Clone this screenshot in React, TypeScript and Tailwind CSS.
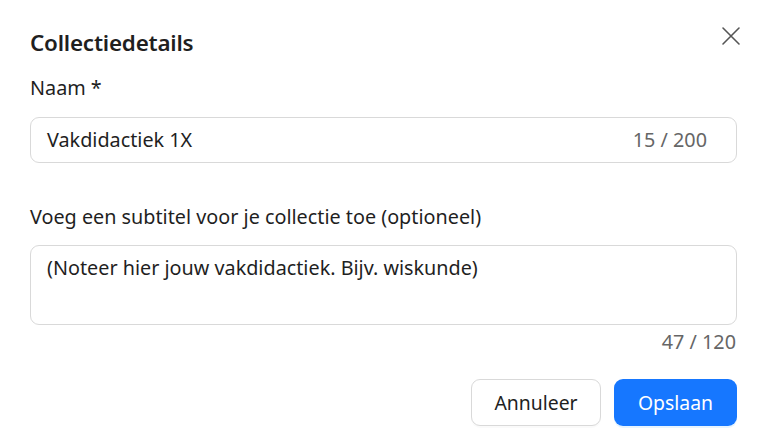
import React from "react";

const font = { fontFamily: '"Noto Sans", "Open Sans", sans-serif' };

export default function App() {
  return (
    <div className="w-[760px] h-[447px] bg-white text-[#1f1f1f] relative" style={font}>
      <button className="absolute right-[17px] top-[24px] w-[24px] h-[24px] flex items-center justify-center text-[#555]">
        <svg width="20" height="20" viewBox="0 0 20 20" fill="none" stroke="currentColor" strokeWidth="1.6" strokeLinecap="round">
          <path d="M2 2 L18 18 M18 2 L2 18" />
        </svg>
      </button>
      <div className="pl-[30px] pr-[23px] pt-[28px]">
        <h2 className="text-[22.4px] leading-[30px] font-semibold tracking-[-0.2px]">Collectiedetails</h2>
        <label className="block mt-[16px] text-[19.8px] leading-[28px]">Naam *</label>
        <div className="mt-[15px] h-[46px] border border-[#d9d9d9] rounded-[9px] flex items-center justify-between pl-[16px] pr-[29px]">
          <span className="text-[19.8px]">Vakdidactiek 1X</span>
          <span className="text-[19.8px] text-[#666]">15 / 200</span>
        </div>
        <label className="block mt-[40px] text-[19.8px] leading-[28px]">
          Voeg een subtitel voor je collectie toe (optioneel)
        </label>
        <div className="mt-[14px] h-[80px] border border-[#d9d9d9] rounded-[9px] pl-[16px] pt-[8px] text-[19.8px] leading-[28px]">
          (Noteer hier jouw vakdidactiek. Bijv. wiskunde)
        </div>
        <div className="text-right text-[19.8px] leading-[28px] text-[#666] mt-[3px] pr-[1px]">47 / 120</div>
        <div className="flex justify-end gap-[13px] mt-[23px]">
          <button className="w-[130px] h-[47px] border border-[#d9d9d9] rounded-[9px] bg-white text-[19.4px] shadow-[0_2px_0_rgba(0,0,0,0.02)]">
            Annuleer
          </button>
          <button className="w-[123px] h-[47px] rounded-[9px] bg-[#1677ff] text-white text-[19.4px] shadow-[0_2px_0_rgba(5,145,255,0.1)]">
            Opslaan
          </button>
        </div>
      </div>
    </div>
  );
}
